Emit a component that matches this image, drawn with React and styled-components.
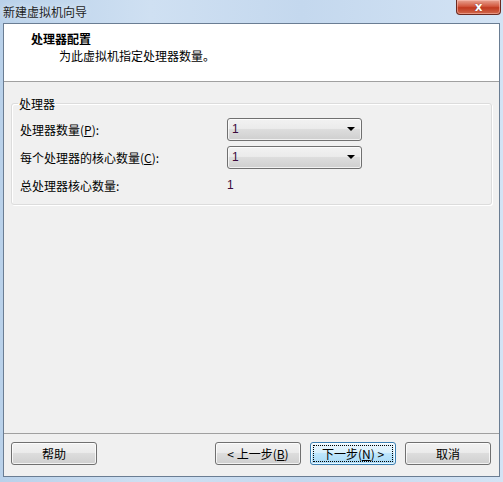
import React from 'react';
import styled, { createGlobalStyle } from 'styled-components';

const GlobalStyle = createGlobalStyle`
  html, body {
    margin: 0;
    padding: 0;
    background: #c9dcf0;
  }
  * {
    box-sizing: border-box;
  }
`;

const font = `"Microsoft YaHei", "Noto Sans CJK SC", "Noto Sans", sans-serif`;

const Window = styled.div`
  width: 503px;
  height: 482px;
  display: flex;
  flex-direction: column;
  padding: 0 3px 5px 3px;
  background: linear-gradient(to right, #b9d1ea 0%, #cfe0f2 30%, #c4d8ee 60%, #d3e3f4 100%);
  font-family: ${font};
  font-size: 12px;
  color: #000;
  overflow: hidden;
`;

const TitleBar = styled.div`
  height: 23px;
  display: flex;
  align-items: flex-start;
  justify-content: space-between;
`;

const Title = styled.div`
  padding: 4px 0 0 0;
  line-height: 16px;
  color: #1e1e1e;
  text-shadow: 0 0 6px #e8f1fb;
`;

const CloseButton = styled.div`
  width: 45px;
  height: 15px;
  margin-right: -1px;
  border: 1px solid #6b2a20;
  border-top: none;
  border-radius: 0 0 4px 4px;
  background: linear-gradient(to bottom, #e8a493 0%, #d2583f 45%, #c0391f 55%, #d26a4e 100%);
  box-shadow: inset 0 0 0 1px rgba(255, 200, 190, 0.5);
  display: flex;
  align-items: center;
  justify-content: center;
  color: #fff;
  font-family: "DejaVu Sans", sans-serif;
  font-weight: bold;
  font-size: 12px;
  line-height: 12px;
  text-shadow: 0 0 1px #5a1a10;
`;

const Client = styled.div`
  flex: 1;
  display: flex;
  flex-direction: column;
  border: 1px solid #6a7d93;
  background: #f0f0f0;
`;

const Header = styled.div`
  height: 58px;
  background: #fff;
  border-bottom: 1px solid #a0a0a0;
  padding: 6px 0 0 27px;
`;

const Heading = styled.div`
  font-weight: bold;
  line-height: 18px;
`;

const Subtitle = styled.div`
  padding-left: 28px;
  line-height: 16px;
`;

const Body = styled.div`
  flex: 1;
  padding: 14px 7px 0 7px;
`;

const GroupBox = styled.fieldset`
  margin: 0;
  padding: 4px 8px 10px 8px;
  border: 1px solid #dcdcdc;
  border-radius: 3px;
  box-shadow: inset 1px 1px 0 #fff, 1px 1px 0 #fff;
  height: 109px;
`;

const Legend = styled.legend`
  padding: 0 1px;
  margin-left: -2px;
  line-height: 15px;
`;

const Row = styled.div`
  display: flex;
  align-items: center;
  height: 28px;
`;

const Label = styled.div`
  width: 207px;
  padding-top: ${(p) => (p.$plain ? '0' : '1px')};
`;

const Combo = styled.div`
  width: 135px;
  height: 23px;
  border: 1px solid #707070;
  border-radius: 3px;
  background: linear-gradient(to bottom, #f2f2f2 0%, #ebebeb 45%, #dddddd 50%, #cfcfcf 100%);
  box-shadow: inset 0 0 0 1px rgba(255, 255, 255, 0.7);
  display: flex;
  align-items: center;
  justify-content: space-between;
  padding: 0 6px 0 4px;
`;

const Value = styled.span`
  color: #3b0a3b;
  font-family: "Liberation Sans", Arial, sans-serif;
  font-size: 12px;
`;

const Arrow = styled.span`
  width: 0;
  height: 0;
  border-left: 4px solid transparent;
  border-right: 4px solid transparent;
  border-top: 4px solid #000;
`;

const Footer = styled.div`
  height: 43px;
  border-top: 1px solid #a0a0a0;
  display: flex;
  align-items: center;
  padding: 0 8px 3px 7px;
`;

const Button = styled.div`
  width: 86px;
  height: 23px;
  border: 1px solid ${(p) => (p.$default ? '#3c7fb1' : '#707070')};
  border-radius: 3px;
  background: ${(p) =>
    p.$default
      ? 'linear-gradient(to bottom, #eaf6fd 0%, #d9f0fc 45%, #bee6fd 50%, #a7d9f5 100%)'
      : 'linear-gradient(to bottom, #f2f2f2 0%, #ebebeb 45%, #dddddd 50%, #cfcfcf 100%)'};
  box-shadow: inset 0 0 0 1px rgba(255, 255, 255, 0.75);
  display: flex;
  align-items: center;
  justify-content: center;
  margin-left: ${(p) => p.$gap || 0}px;
  position: relative;

  ${(p) =>
    p.$default &&
    `
    &::after {
      content: '';
      position: absolute;
      inset: 2px;
      border: 1px dotted #000;
    }
  `}
`;

const Key = styled.u`
  text-decoration: underline;
`;

const Spacer = styled.div`
  flex: 1;
`;

export default function App() {
  return (
    <>
      <GlobalStyle />
      <Window>
        <TitleBar>
          <Title>新建虚拟机向导</Title>
          <CloseButton>x</CloseButton>
        </TitleBar>
        <Client>
          <Header>
            <Heading>处理器配置</Heading>
            <Subtitle>为此虚拟机指定处理器数量。</Subtitle>
          </Header>
          <Body>
            <GroupBox>
              <Legend>处理器</Legend>
              <Row>
                <Label>
                  处理器数量(<Key>P</Key>):
                </Label>
                <Combo>
                  <Value>1</Value>
                  <Arrow />
                </Combo>
              </Row>
              <Row>
                <Label>
                  每个处理器的核心数量(<Key>C</Key>):
                </Label>
                <Combo>
                  <Value>1</Value>
                  <Arrow />
                </Combo>
              </Row>
              <Row>
                <Label $plain>总处理器核心数量:</Label>
                <Value>1</Value>
              </Row>
            </GroupBox>
          </Body>
          <Footer>
            <Button>帮助</Button>
            <Spacer />
            <Button>
              &lt; 上一步(<Key>B</Key>)
            </Button>
            <Button $default $gap={9}>
              下一步(<Key>N</Key>) &gt;
            </Button>
            <Button $gap={9}>取消</Button>
          </Footer>
        </Client>
      </Window>
    </>
  );
}
